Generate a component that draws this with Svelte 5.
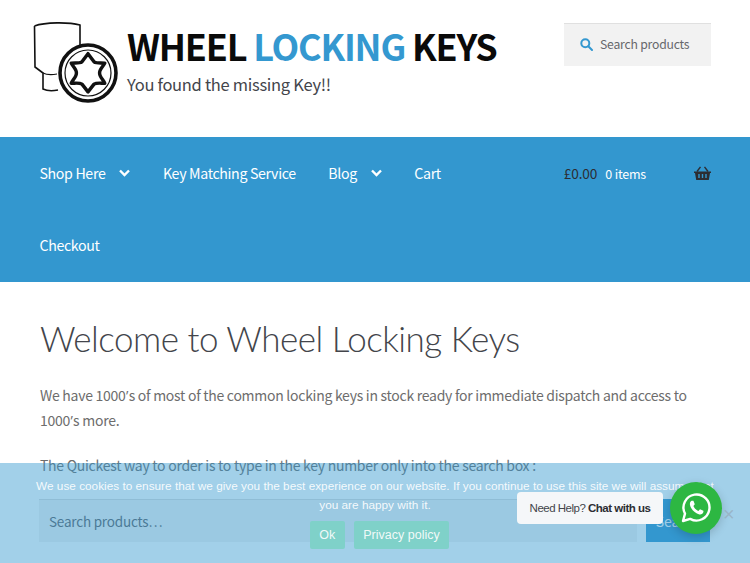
<script>
  const navItems = [
    { label: 'Shop Here', caret: true },
    { label: 'Key Matching Service' },
    { label: 'Blog', caret: true },
    { label: 'Cart' }
  ]
</script>

<div class="page">
  <header class="site-header">
    <div class="branding">
      <svg class="logo" width="90" height="90" viewBox="0 0 90 90" fill="none" stroke="#111">
        <path d="M1.5 7 C 12 3, 36 3, 47 6 L 47 29 M1.5 7 L 2 48 L 10 54 L 10 70 C 14 72, 20 72, 25 71" stroke-width="1.6"/>
        <path d="M10 54 C 14 56, 18 56, 24 55" stroke-width="1.2"/>
        <circle cx="55" cy="54" r="28" fill="#fff" stroke-width="3.6"/>
        <circle cx="55" cy="54" r="23" stroke-width="1.2"/>
        <path d="M55 31.5 L 62 41 C 65 43 70 42 74.5 42.5 C 73 46 68 50 68.5 54 C 68 58 73 62 74.5 66 C 70 66 65 65 62 67 L 55 76 L 48 67 C 45 65 40 66 35.5 66 C 37 62 42 58 41.5 54 C 42 50 37 46 35.5 42.5 C 40 42 45 43 48 41 Z" transform="translate(55 54) scale(.86) translate(-55 -54)" stroke-width="4" stroke-linejoin="round"/>
      </svg>
      <div class="brand-text">
        <div class="site-title">WHEEL <span class="blue">LOCKING</span> KEYS</div>
        <div class="tagline">You found the missing Key!!</div>
      </div>
    </div>
    <div class="header-search">
      <svg width="13" height="13" viewBox="0 0 13 13" fill="none" stroke="#3498d0" stroke-width="2">
        <circle cx="5.3" cy="5.3" r="4"/>
        <path d="M8.3 8.3 L12 12" stroke-linecap="round"/>
      </svg>
      <span>Search products</span>
    </div>
  </header>

  <nav class="main-nav">
    <ul class="menu">
      {#each navItems as item}
        <li>
          {item.label}
          {#if item.caret}
            <svg width="11" height="8" viewBox="0 0 11 8" fill="none" stroke="#fff" stroke-width="2.4"><path d="M1 1.5 L5.5 6 L10 1.5"/></svg>
          {/if}
        </li>
      {/each}
      <li class="cart">
        <span class="amount">£0.00</span>
        <span class="count">0 items</span>
        <svg width="17" height="14" viewBox="0 0 17 14" fill="#2c2d33">
          <path d="M0 5.5 H17 V7 H16 L14.8 14 H2.2 L1 7 H0 Z"/>
          <path d="M3 5.5 L6.5 .8 M14 5.5 L10.5 .8" stroke="#2c2d33" stroke-width="1.4" fill="none"/>
          <path d="M5 8 V12 M8.5 8 V12 M12 8 V12" stroke="#3498d0" stroke-width="1.4"/>
        </svg>
      </li>
      <li class="checkout">Checkout</li>
    </ul>
  </nav>

  <main class="content">
    <h1>Welcome to Wheel Locking Keys</h1>
    <p>We have 1000<span class="apos">’</span>s of most of the common locking keys in stock ready for immediate dispatch and access to 1000<span class="apos">’</span>s more.</p>
    <p>The Quickest way to order is to type in the key number only into the search box :</p>
    <form class="search-form">
      <div class="search-input">Search products…</div>
      <div class="search-btn">Search</div>
    </form>
  </main>

  <div class="cookie-bar">
    <p>We use cookies to ensure that we give you the best experience on our website. If you continue to use this site we will assume that you are happy with it.</p>
    <div class="cookie-actions">
      <span class="cookie-btn">Ok</span>
      <span class="cookie-btn">Privacy policy</span>
    </div>
  </div>

  <div class="chat">
    <div class="chat-label">Need Help? <b>Chat with us</b></div>
    <div class="chat-btn">
      <svg width="32" height="32" viewBox="0 0 32 32">
        <path d="M3 29 L5 21.6 A13 13 0 1 1 10.2 26.9 Z" fill="none" stroke="#fff" stroke-width="2.4" stroke-linejoin="round"/>
        <path d="M11.6 8.8 C 10.4 9.4 9.6 11 10 13 C 10.8 17 15 21.6 19.4 22.4 C 21.4 22.8 23 21.6 23.4 20 L 23.4 18.8 L 20 17.2 L 18.4 19 C 16.4 18.2 14.2 16 13.4 14 L 14.8 12.2 L 13.4 8.8 Z" fill="#fff"/>
      </svg>
    </div>
    <span class="chat-close">×</span>
  </div>
</div>

<style>
  :global(body) {
    margin: 0;
    background: #fff;
  }

  .page {
    width: 750px;
    height: 563px;
    overflow: hidden;
    position: relative;
    font-family: "Noto Sans CJK SC", "Source Sans Pro", "Noto Sans", sans-serif;
    color: #6d6d6d;
  }

  .site-header {
    height: 137px;
    box-sizing: border-box;
    padding: 18px 39px 0 33px;
    display: flex;
    justify-content: space-between;
    align-items: flex-start;
  }

  .branding {
    display: flex;
    gap: 4px;
  }

  .logo {
    margin-top: 1px;
  }

  .brand-text {
    margin-top: 5px;
  }

  .site-title {
    font-size: 36px;
    font-weight: 700;
    line-height: 44px;
    letter-spacing: -1.2px;
    color: #0a0a0a;
    white-space: nowrap;
  }

  .blue {
    color: #3498d0;
  }

  .tagline {
    margin-top: 3px;
    font-size: 16.5px;
    line-height: 28px;
    letter-spacing: -0.3px;
    color: #43454b;
  }

  .header-search {
    margin-top: 5px;
    width: 147px;
    height: 43px;
    box-sizing: border-box;
    border-top: 1px solid #e0e0e0;
    background: #f2f2f2;
    padding-left: 16px;
    padding-bottom: 2px;
    display: flex;
    align-items: center;
    gap: 7px;
    font-size: 12.2px;
    letter-spacing: -0.2px;
    color: #66676b;
  }

  .main-nav {
    background: #3397cf;
    height: 145px;
    padding: 0 39px 0 39.5px;
    color: #fff;
  }

  .menu {
    list-style: none;
    margin: 0;
    padding: 0;
    display: flex;
    flex-wrap: wrap;
    gap: 0 32.5px;
    font-size: 14.2px;
    letter-spacing: -0.35px;
  }

  .menu li {
    height: 72px;
    box-sizing: border-box;
    display: flex;
    align-items: center;
    gap: 14px;
    white-space: nowrap;
  }

  .menu .checkout {
    flex-basis: 100%;
  }

  .cart {
    margin-left: auto;
    gap: 8px !important;
  }

  .amount {
    color: #2c2d33;
    font-size: 13.7px;
    letter-spacing: -0.1px;
  }

  .count {
    font-size: 12.5px;
    letter-spacing: -0.2px;
    margin-right: 40px;
  }

  .content {
    padding: 0 40px;
  }

  h1 {
    margin: 32px 0 0;
    font-family: Lato, "Noto Sans CJK SC", sans-serif;
    font-size: 35px;
    font-weight: 300;
    line-height: 48px;
    letter-spacing: -0.5px;
    color: #43454b;
  }

  .content p {
    margin: 20px 0 0;
    font-size: 14px;
    line-height: 25px;
    letter-spacing: -0.27px;
  }

  .content h1 + p {
    margin-top: 21px;
  }

  .apos {
    font-family: "Open Sans", sans-serif;
    padding: 0 0.5px;
  }

  .search-form {
    margin-top: 21px;
    margin-left: -1px;
    display: flex;
    gap: 9px;
  }

  .search-input {
    flex: 1;
    height: 43px;
    box-sizing: border-box;
    padding-left: 10px;
    display: flex;
    align-items: center;
    background: #f2f2f2;
    border-top: 1px solid #ddd;
    font-size: 13.5px;
    letter-spacing: -0.2px;
    color: #5f6066;
  }

  .search-btn {
    width: 64px;
    height: 43px;
    display: flex;
    align-items: center;
    justify-content: center;
    background: #3397cf;
    color: #fff;
    font-size: 14px;
  }

  .cookie-bar {
    position: absolute;
    left: 0;
    right: 0;
    bottom: 0;
    height: 100px;
    box-sizing: border-box;
    padding: 14px 30px 0;
    background: rgba(52, 152, 208, 0.46);
    text-align: center;
    font-family: "Liberation Sans", Arial, sans-serif;
    font-size: 11.8px;
    color: rgba(255, 255, 255, 0.9);
  }

  .cookie-bar p {
    margin: 0;
    line-height: 19px;
  }

  .cookie-actions {
    margin-top: 6px;
    margin-left: 9px;
    display: flex;
    justify-content: center;
    gap: 9px;
  }

  .cookie-btn {
    padding: 0 9.5px;
    height: 28px;
    line-height: 28px;
    border-radius: 2px;
    background: #7fd1c9;
    font-size: 12.5px;
  }

  .chat {
    position: absolute;
    left: 517px;
    top: 482px;
    display: flex;
    align-items: center;
  }

  .chat-label {
    height: 32px;
    width: 146px;
    box-sizing: border-box;
    line-height: 32px;
    text-align: center;
    background: #f5f7f9;
    border-radius: 4px;
    font-family: "Liberation Sans", Arial, sans-serif;
    font-size: 11.5px;
    letter-spacing: -0.5px;
    color: #43454b;
  }

  .chat-label b {
    color: #2c2d33;
  }

  .chat-btn {
    margin-left: 7px;
    width: 52px;
    height: 52px;
    border-radius: 50%;
    background: #2db742;
    display: flex;
    align-items: center;
    justify-content: center;
    box-shadow: 0 3px 10px rgba(0, 0, 0, 0.18);
  }

  .chat-close {
    position: absolute;
    left: 206px;
    top: 22px;
    font-family: "Liberation Sans", Arial, sans-serif;
    font-size: 20px;
    line-height: 20px;
    color: rgba(150, 170, 185, 0.7);
  }
</style>
